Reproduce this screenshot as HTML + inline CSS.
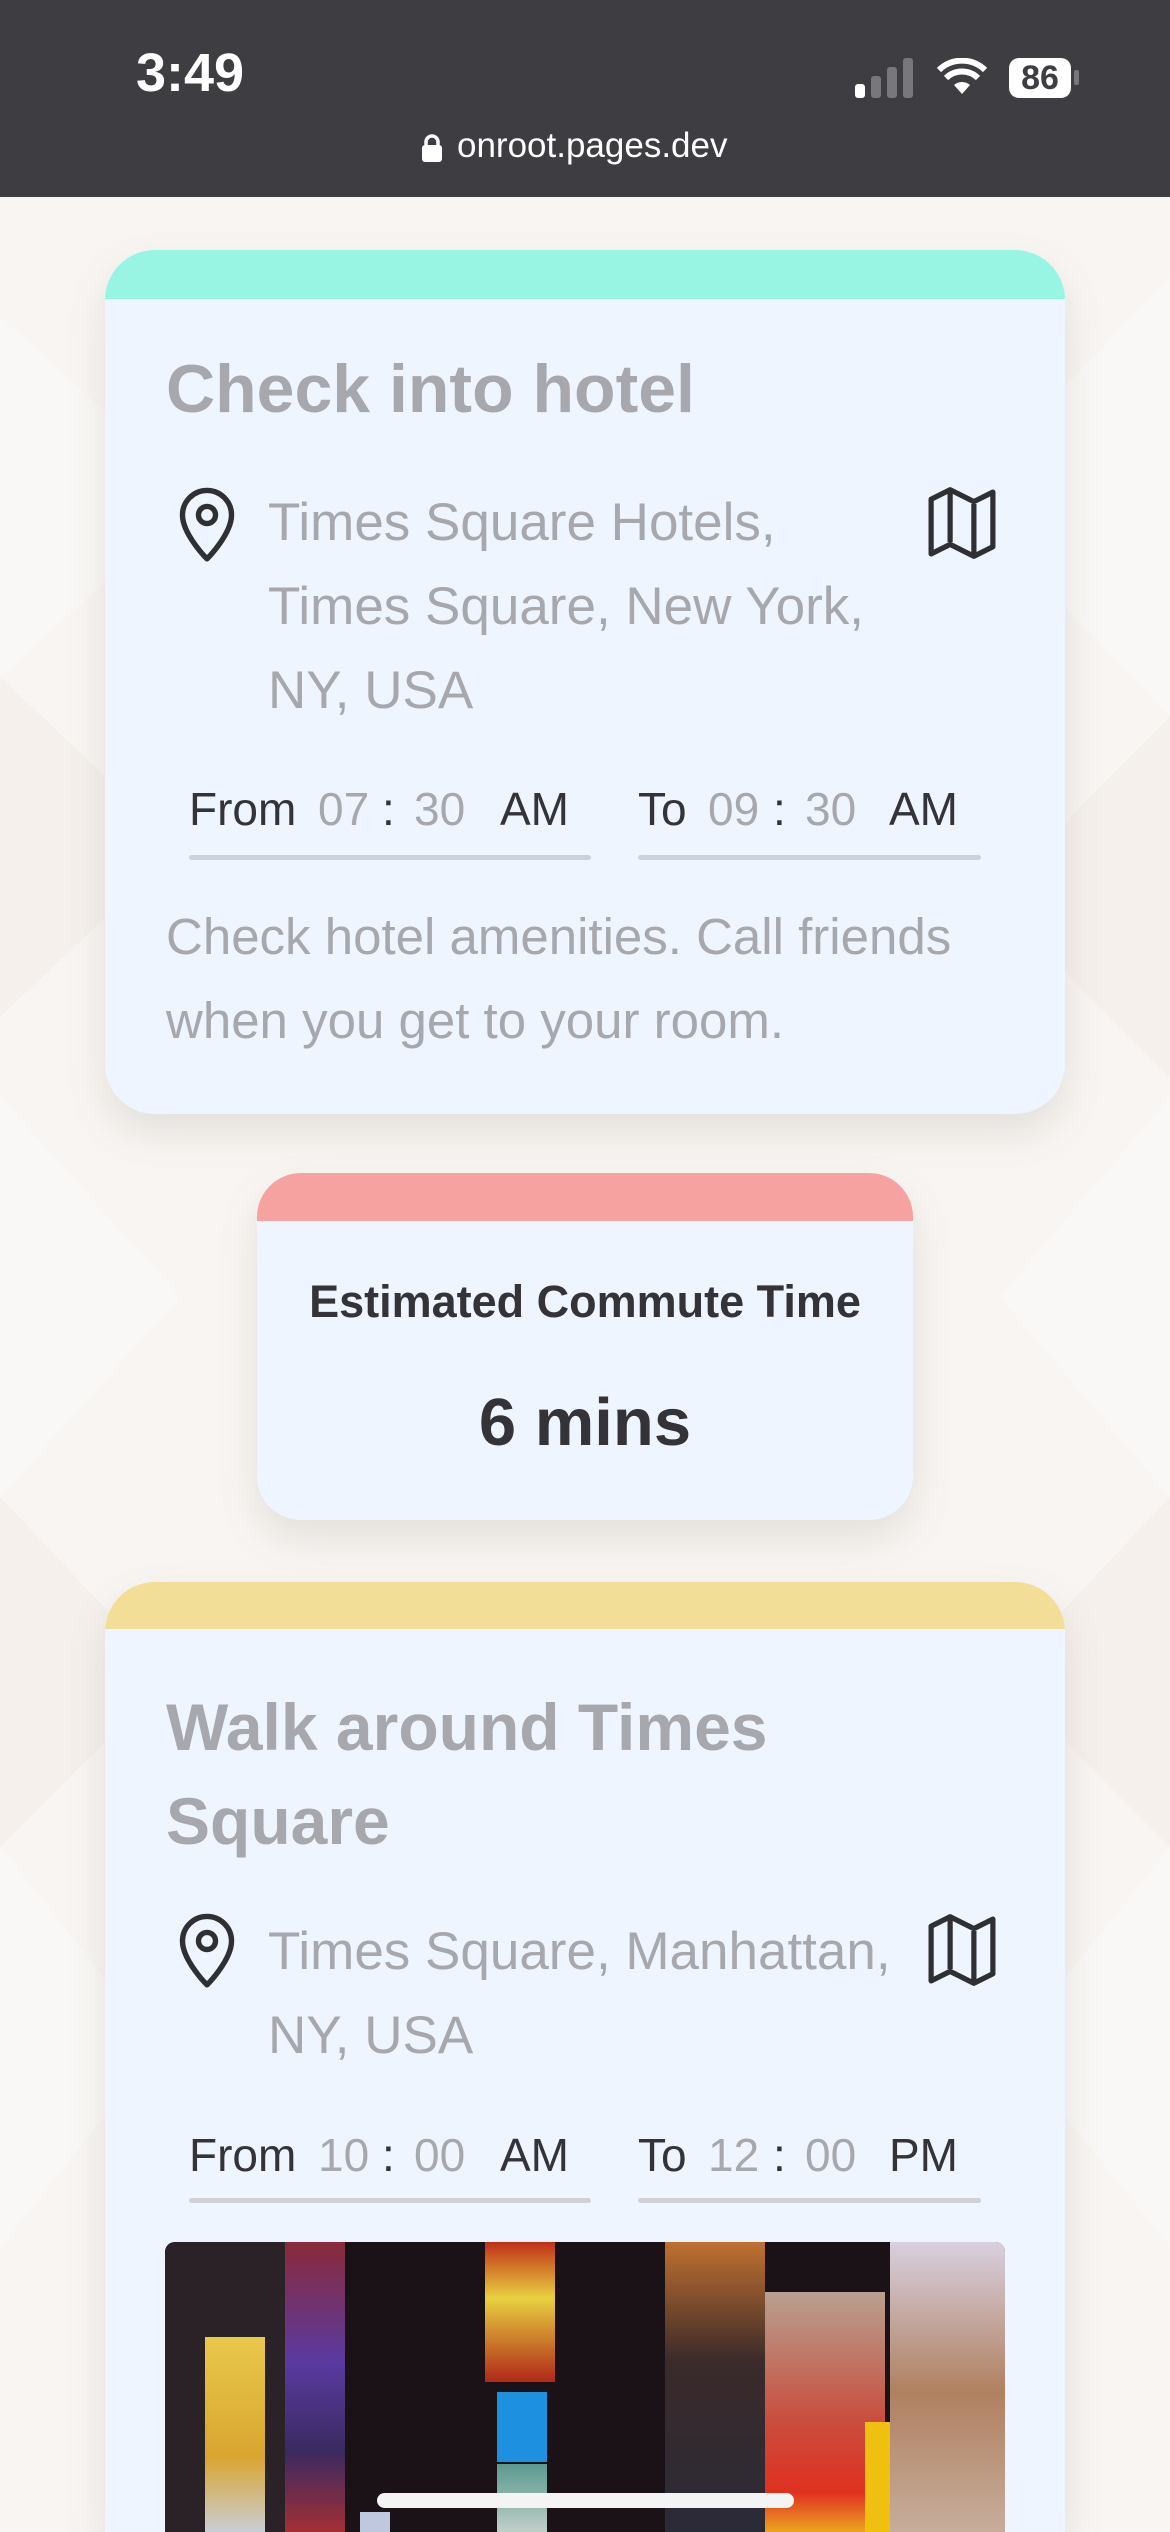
<!DOCTYPE html>
<html style="width:1170px;height:2532px;overflow:hidden"><head><meta charset="utf-8">
<style>
*{margin:0;padding:0;box-sizing:border-box}
body{width:1170px;height:2532px;overflow:hidden;position:relative;font-family:"Liberation Sans",Roboto,sans-serif;background:#f8f5f2}
.abs{position:absolute;white-space:nowrap}
.status{position:absolute;left:0;top:0;width:1170px;height:197px;background:#3d3d42;z-index:5}
.card{position:absolute;background:#eff5ff;border-radius:50px;overflow:hidden;box-shadow:0 18px 40px rgba(120,110,100,.16)}
.strip{position:absolute;left:0;top:0;width:100%}
.grey{color:#a6a8ad}
.dark{color:#333338}
.t{font-size:46px}
.line{position:absolute;height:5px;background:#cfd1d8;border-radius:3px}
</style></head><body>
<svg class="abs" style="left:0;top:197px" width="1170" height="2335" viewBox="0 0 1170 2335">
<g fill="#ffffff" opacity=".3">
<polygon points="0,120 200,300 0,480"/>
<polygon points="1170,80 960,300 1170,520"/>
<polygon points="0,900 180,1100 0,1300"/>
<polygon points="1170,900 1000,1100 1170,1300"/>
<polygon points="0,1650 160,1850 0,2050"/>
<polygon points="1170,1650 1010,1850 1170,2050"/>
</g>
<g fill="#efe9e4" opacity=".4">
<polygon points="0,480 180,650 0,820"/>
<polygon points="1170,520 990,700 1170,880"/>
<polygon points="0,1300 170,1480 0,1650"/>
<polygon points="1170,1300 1000,1480 1170,1650"/>
</g>
</svg>

<div class="status">
  <div class="abs" style="left:136px;top:42px;font-size:54px;font-weight:bold;color:#fff">3:49</div>
  <svg class="abs" style="left:855px;top:58px" width="62" height="40"><rect x="0" y="26" width="10" height="14" rx="3" fill="#fff"/><rect x="16" y="18" width="10" height="22" rx="3" fill="#77777c"/><rect x="32" y="9" width="10" height="31" rx="3" fill="#77777c"/><rect x="48" y="0" width="10" height="40" rx="3" fill="#77777c"/></svg>
  <svg class="abs" style="left:937px;top:58px" width="50" height="38" viewBox="0 0 50 38"><path d="M25 36 L17 27 A12 12 0 0 1 33 27Z" fill="#fff"/><path d="M9 20 A23 23 0 0 1 41 20" stroke="#fff" stroke-width="6" fill="none"/><path d="M2 12 A33 33 0 0 1 48 12" stroke="#fff" stroke-width="6" fill="none"/></svg>
  <div class="abs" style="left:1009px;top:58px;width:62px;height:40px;background:#fff;border-radius:10px;color:#3d3d42;font-size:34px;font-weight:bold;text-align:center;line-height:40px">86</div>
  <div class="abs" style="left:1074px;top:70px;width:5px;height:15px;background:#77777c;border-radius:2px"></div>
  <svg class="abs" style="left:422px;top:133px" width="20" height="30" viewBox="0 0 20 30"><path d="M4 13 V9 A6 6 0 0 1 16 9 V13" stroke="#fff" stroke-width="3.5" fill="none"/><rect x="0" y="12" width="20" height="17" rx="3" fill="#fff"/></svg>
  <div class="abs" style="left:457px;top:126px;font-size:35px;color:#fff">onroot.pages.dev</div>
</div>

<!-- Card 1 -->
<div class="card" style="left:105px;top:250px;width:960px;height:864px">
  <div class="strip" style="height:49px;background:#99f5e3"></div>
</div>
<div class="abs grey" style="left:166px;top:350px;font-size:68px;font-weight:bold">Check into hotel</div>
<svg class="abs" style="left:176px;top:484px" width="62" height="80" viewBox="0 0 24 31"><path d="M12 29 C12 29 2.5 19.5 2.5 12 A9.5 9.5 0 0 1 21.5 12 C21.5 19.5 12 29 12 29Z" stroke="#2f3034" stroke-width="2.1" fill="none" stroke-linejoin="round"/><circle cx="12" cy="12" r="3.3" stroke="#2f3034" stroke-width="2.1" fill="none"/></svg>
<svg class="abs" style="left:926px;top:485px" width="72" height="76" viewBox="0 0 30 32"><path d="M2 6 L10 2 L20 7 L28 3 V26 L20 30 L10 25 L2 29Z" stroke="#2f3034" stroke-width="2.2" fill="none" stroke-linejoin="round"/><path d="M10 3 V24 M20 8 V29" stroke="#2f3034" stroke-width="2.2"/></svg>
<div class="abs grey" style="left:268px;top:481px;font-size:53px;line-height:84px">Times Square Hotels,<br>Times Square, New York,<br>NY, USA</div>
<div class="abs t dark" style="left:189px;top:782px">From</div>
<div class="abs t grey" style="left:318px;top:782px">07</div>
<div class="abs t dark" style="left:382px;top:782px">:</div>
<div class="abs t grey" style="left:414px;top:782px">30</div>
<div class="abs t dark" style="left:500px;top:782px">AM</div>
<div class="line" style="left:189px;top:855px;width:402px"></div>
<div class="abs t dark" style="left:638px;top:782px">To</div>
<div class="abs t grey" style="left:708px;top:782px">09</div>
<div class="abs t dark" style="left:773px;top:782px">:</div>
<div class="abs t grey" style="left:805px;top:782px">30</div>
<div class="abs t dark" style="left:889px;top:782px">AM</div>
<div class="line" style="left:638px;top:855px;width:343px"></div>
<div class="abs grey" style="left:166px;top:895px;font-size:51px;line-height:84px">Check hotel amenities. Call friends<br>when you get to your room.</div>

<!-- Commute card -->
<div class="card" style="left:257px;top:1173px;width:656px;height:347px;border-radius:44px">
  <div class="strip" style="height:48px;background:#f6a2a1"></div>
</div>
<div class="abs dark" style="left:257px;width:656px;text-align:center;top:1276px;font-size:45px;font-weight:bold">Estimated Commute Time</div>
<div class="abs dark" style="left:257px;width:656px;text-align:center;top:1384px;font-size:67px;font-weight:bold">6 mins</div>

<!-- Card 2 -->
<div class="card" style="left:105px;top:1582px;width:960px;height:950px;border-bottom-left-radius:0;border-bottom-right-radius:0">
  <div class="strip" style="height:47px;background:#f3de98"></div>
</div>
<div class="abs grey" style="left:166px;top:1680px;font-size:66px;font-weight:bold;line-height:94px">Walk around Times<br>Square</div>
<svg class="abs" style="left:176px;top:1910px" width="62" height="80" viewBox="0 0 24 31"><path d="M12 29 C12 29 2.5 19.5 2.5 12 A9.5 9.5 0 0 1 21.5 12 C21.5 19.5 12 29 12 29Z" stroke="#2f3034" stroke-width="2.1" fill="none" stroke-linejoin="round"/><circle cx="12" cy="12" r="3.3" stroke="#2f3034" stroke-width="2.1" fill="none"/></svg>
<svg class="abs" style="left:926px;top:1912px" width="72" height="76" viewBox="0 0 30 32"><path d="M2 6 L10 2 L20 7 L28 3 V26 L20 30 L10 25 L2 29Z" stroke="#2f3034" stroke-width="2.2" fill="none" stroke-linejoin="round"/><path d="M10 3 V24 M20 8 V29" stroke="#2f3034" stroke-width="2.2"/></svg>
<div class="abs grey" style="left:268px;top:1910px;font-size:53px;line-height:84px">Times Square, Manhattan,<br>NY, USA</div>
<div class="abs t dark" style="left:189px;top:2128px">From</div>
<div class="abs t grey" style="left:318px;top:2128px">10</div>
<div class="abs t dark" style="left:382px;top:2128px">:</div>
<div class="abs t grey" style="left:414px;top:2128px">00</div>
<div class="abs t dark" style="left:500px;top:2128px">AM</div>
<div class="line" style="left:189px;top:2198px;width:402px"></div>
<div class="abs t dark" style="left:638px;top:2128px">To</div>
<div class="abs t grey" style="left:708px;top:2128px">12</div>
<div class="abs t dark" style="left:773px;top:2128px">:</div>
<div class="abs t grey" style="left:805px;top:2128px">00</div>
<div class="abs t dark" style="left:889px;top:2128px">PM</div>
<div class="line" style="left:638px;top:2198px;width:343px"></div>

<!-- Photo -->
<div class="abs" style="left:165px;top:2242px;width:840px;height:290px;border-radius:10px 10px 0 0;overflow:hidden;background:#1a1216">
  <div class="abs" style="left:0;top:0;width:125px;height:300px;background:#2a2226"></div>
  <div class="abs" style="left:40px;top:95px;width:60px;height:200px;background:linear-gradient(#e8c84a,#d9a530 60%,#c8d0e0)"></div>
  <div class="abs" style="left:120px;top:0;width:60px;height:300px;background:linear-gradient(#8a2a3a,#5a3aa0 40%,#3a2a60 70%,#b03030)"></div>
  <div class="abs" style="left:195px;top:270px;width:30px;height:20px;background:#c0c8e0"></div>
  <div class="abs" style="left:320px;top:0;width:70px;height:140px;background:linear-gradient(#c03018,#e8d040 40%,#b02818)"></div>
  <div class="abs" style="left:332px;top:150px;width:50px;height:70px;background:#1e90e0"></div>
  <div class="abs" style="left:332px;top:222px;width:50px;height:78px;background:linear-gradient(#5a9a90,#cfd6d0)"></div>
  <div class="abs" style="left:500px;top:0;width:100px;height:300px;background:linear-gradient(#c07030,#3a2a2a 40%,#2a2a38)"></div>
  <div class="abs" style="left:600px;top:50px;width:120px;height:250px;background:linear-gradient(#b8a090,#c85040 50%,#e03020 80%,#f0c020)"></div>
  <div class="abs" style="left:725px;top:0;width:115px;height:300px;background:linear-gradient(#d8d0e0,#b08060 50%,#c8b0a0)"></div>
  <div class="abs" style="left:700px;top:180px;width:25px;height:120px;background:#f0c010"></div>
</div>
<div class="abs" style="left:377px;top:2493px;width:417px;height:15px;border-radius:8px;background:#f4f4f4"></div>
</body></html>
